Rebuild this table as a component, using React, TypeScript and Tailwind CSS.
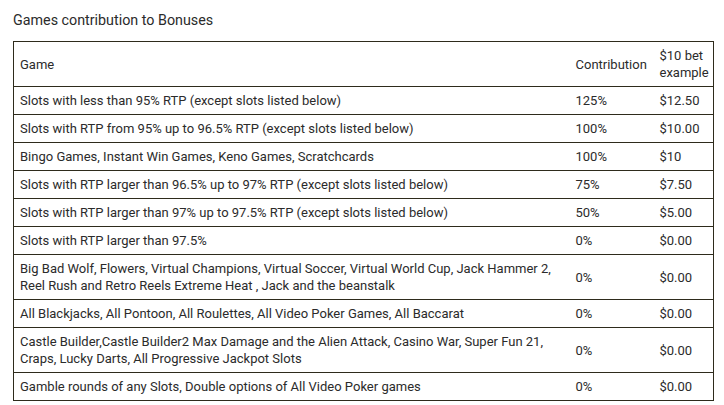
const rows: { game: React.ReactNode; pct: string; bet: string }[] = [
  { game: "Slots with less than 95% RTP (except slots listed below)", pct: "125%", bet: "$12.50" },
  { game: "Slots with RTP from 95% up to 96.5% RTP (except slots listed below)", pct: "100%", bet: "$10.00" },
  { game: "Bingo Games, Instant Win Games, Keno Games, Scratchcards", pct: "100%", bet: "$10" },
  { game: "Slots with RTP larger than 96.5% up to 97% RTP (except slots listed below)", pct: "75%", bet: "$7.50" },
  { game: "Slots with RTP larger than 97% up to 97.5% RTP (except slots listed below)", pct: "50%", bet: "$5.00" },
  { game: "Slots with RTP larger than 97.5%", pct: "0%", bet: "$0.00" },
  {
    game: (
      <>
        Big Bad Wolf, Flowers, Virtual Champions, Virtual Soccer, Virtual World Cup, Jack Hammer 2,
        <br />
        Reel Rush and Retro Reels Extreme Heat , Jack and the beanstalk
      </>
    ),
    pct: "0%",
    bet: "$0.00",
  },
  { game: "All Blackjacks, All Pontoon, All Roulettes, All Video Poker Games, All Baccarat", pct: "0%", bet: "$0.00" },
  {
    game: (
      <>
        Castle Builder,Castle Builder2 Max Damage and the Alien Attack, Casino War, Super Fun 21,
        <br />
        Craps, Lucky Darts, All Progressive Jackpot Slots
      </>
    ),
    pct: "0%",
    bet: "$0.00",
  },
  { game: "Gamble rounds of any Slots, Double options of All Video Poker games", pct: "0%", bet: "$0.00" },
];

export default function App() {
  return (
    <div className="min-h-[405px] w-[724px] bg-white pl-[13px] pt-[10px] text-[#2b2b2b] font-['Roboto','Liberation_Sans',sans-serif]">
      <h2 className="mb-[11px] text-[14.3px] leading-[20px] font-normal">Games contribution to Bonuses</h2>
      <table className="w-[700px] table-fixed border-collapse border border-[#2e2b1c] text-[13px] leading-[17px]">
        <colgroup>
          <col className="w-[556px]" />
          <col className="w-[84px]" />
          <col className="w-[60px]" />
        </colgroup>
        <thead>
          <tr className="border-b border-[#2e2b1c]">
            <th className="px-[6px] py-[5px] text-left font-normal align-middle">Game</th>
            <th className="px-[6px] py-[5px] text-left font-normal align-middle">Contribution</th>
            <th className="px-[6px] py-[5px] text-left font-normal align-middle">
              $10 bet
              <br />
              example
            </th>
          </tr>
        </thead>
        <tbody>
          {rows.map((r, i) => (
            <tr key={i} className="border-b border-[#2e2b1c]">
              <td className="px-[6px] py-[5px] align-middle">{r.game}</td>
              <td className="px-[6px] py-[5px] align-middle">{r.pct}</td>
              <td className="px-[6px] py-[5px] align-middle">{r.bet}</td>
            </tr>
          ))}
        </tbody>
      </table>
    </div>
  );
}
